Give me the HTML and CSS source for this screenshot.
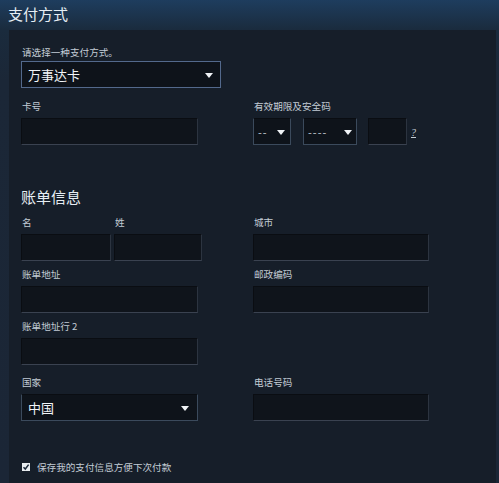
FILE: index.html
```html
<!DOCTYPE html>
<html lang="zh-CN">
<head>
<meta charset="utf-8">
<title>支付方式</title>
<link rel="stylesheet" href="styles.css">
</head>
<body>
<h1 class="page-title">支付方式</h1>
<div class="panel">
  <div class="field">
    <div class="label">请选择一种支付方式。</div>
    <div class="select select-main"><span class="select-text">万事达卡</span><span class="arrow"></span></div>
  </div>

  <div class="grid grid-card">
    <div class="field">
      <div class="label">卡号</div>
      <div class="input w176"></div>
    </div>
    <div class="field">
      <div class="label">有效期限及安全码</div>
      <div class="expiry">
        <div class="select small month"><span class="dash">--</span><span class="arrow"></span></div>
        <div class="select small year"><span class="dash">----</span><span class="arrow"></span></div>
        <div class="input cvv"></div>
        <a class="help">?</a>
      </div>
    </div>
  </div>

  <h2 class="section-title">账单信息</h2>

  <div class="grid">
    <div class="name-row">
      <div class="field">
        <div class="label">名</div>
        <div class="input w90"></div>
      </div>
      <div class="field">
        <div class="label">姓</div>
        <div class="input w88"></div>
      </div>
    </div>
    <div class="field">
      <div class="label">城市</div>
      <div class="input w175"></div>
    </div>

    <div class="field">
      <div class="label">账单地址</div>
      <div class="input w176"></div>
    </div>
    <div class="field">
      <div class="label">邮政编码</div>
      <div class="input w175"></div>
    </div>

    <div class="field">
      <div class="label">账单地址行 2</div>
      <div class="input w176"></div>
    </div>
    <div class="field"></div>

    <div class="field country">
      <div class="label">国家</div>
      <div class="select w176 sel-country"><span class="select-text">中国</span><span class="arrow"></span></div>
    </div>
    <div class="field country">
      <div class="label">电话号码</div>
      <div class="input w175"></div>
    </div>
  </div>

  <div class="save">
    <span class="checkbox"><svg viewBox="0 0 8 8" width="8" height="8"><path d="M1.5 4.2 L3.3 6 L6.6 1.6" fill="none" stroke="#1b2838" stroke-width="1.5"/></svg></span>
    <span class="save-text">保存我的支付信息方便下次付款</span>
  </div>
</div>
</body>
</html>
```

FILE: styles.css
```css
* { box-sizing: border-box; }
html, body { margin: 0; padding: 0; }
body {
  width: 499px;
  height: 483px;
  overflow: hidden;
  background: linear-gradient(#1e3d5e 0px, #1a2b3d 30px, #1b2737 80px, #1b2636 100%);
  font-family: "Noto Sans CJK SC", "Noto Sans", sans-serif;
  color: #c6d4df;
}
.page-title {
  margin: 0;
  height: 30px;
  padding: 3px 0 0 8px;
  font-size: 15px;
  font-weight: normal;
  line-height: 22px;
  color: #e6edf3;
}
.panel {
  margin: 0 3px 0 9px;
  height: 453px;
  background: #161e29;
  padding: 14px 0 0 12px;
}
.label {
  font-size: 9.6px;
  line-height: 16px;
  height: 16px;
  margin-bottom: 1px;
  padding-left: 1px;
  color: #c3ccd5;
}
.field { display: flex; flex-direction: column; }
.select {
  position: relative;
  height: 27px;
  background: #0e131a;
  border: 1px solid #3b4a5c;
  border-top-color: #0a0d12;
  display: flex;
  align-items: center;
  padding-left: 6px;
}
.select-main {
  width: 200px;
  border: 1px solid #53698c;
}
.select-text {
  font-size: 13px;
  color: #f2f5f8;
  line-height: 20px;
}
.arrow {
  position: absolute;
  right: 7px;
  top: 11px;
  width: 0;
  height: 0;
  border-left: 4px solid transparent;
  border-right: 4px solid transparent;
  border-top: 5px solid #f0f3f6;
}
.input {
  height: 27px;
  background: #0f141b;
  border: 1px solid #0a0d12;
  border-bottom-color: #3a4250;
  border-right-color: #2c3440;
}
.w176 { width: 177px; }
.w175 { width: 176px; }
.w90 { width: 90px; }
.w88 { width: 88px; }
.grid {
  display: grid;
  grid-template-columns: 232px 1fr;
  row-gap: 5px;
}
.grid-card { margin-top: 10px; }
.grid .label, .grid-card .label { margin-bottom: 4px; }
.expiry { display: flex; align-items: center; }
.small { padding-left: 4px; }
.month { width: 38px; margin-right: 12px; }
.year { width: 54px; margin-right: 11px; }
.month .arrow { right: 5px; }
.year .arrow { right: 4px; }
.dash { font-size: 11px; color: #c3ccd5; letter-spacing: 1px; }
.cvv { width: 39px; }
.help {
  margin-left: 4px;
  margin-top: 2px;
  font-size: 10px;
  color: #c3ccd5;
  text-decoration: underline;
  font-family: "Liberation Serif", serif;
  font-style: italic;
}
.section-title {
  margin: 41px 0 6px 0;
  font-size: 15px;
  font-weight: normal;
  line-height: 22px;
  height: 22px;
  color: #e6edf3;
}
.name-row { display: flex; gap: 3px; }
.country { margin-top: 4px; }
.sel-country .arrow { right: 8px; }
.save {
  margin-top: 39px;
  display: flex;
  align-items: center;
  gap: 7px;
  padding-left: 1px;
}
.checkbox {
  width: 8px;
  height: 8px;
  background: #e8ecef;
  display: flex;
}
.save-text { font-size: 9.6px; line-height: 14px; color: #c3ccd5; }
```
